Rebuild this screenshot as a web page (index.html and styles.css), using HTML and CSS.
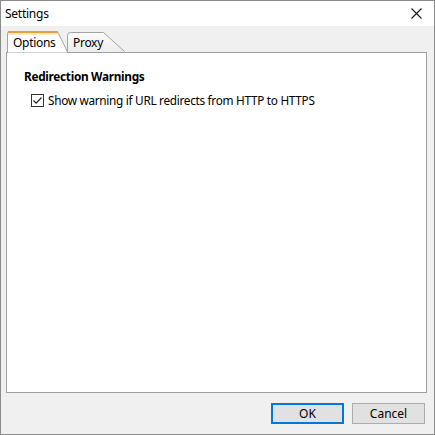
FILE: index.html
```html
<!DOCTYPE html>
<html>
<head>
<meta charset="utf-8">
<link rel="stylesheet" href="styles.css">
</head>
<body>
<div class="window">
  <div class="titlebar">
    <span class="title">Settings</span>
    <svg class="close" width="11" height="11" viewBox="0 0 11 11"><path d="M0.5 0.5L10.5 10.5M10.5 0.5L0.5 10.5" stroke="#1a1a1a" stroke-width="1.1" fill="none"/></svg>
  </div>
  <div class="content">
    <div class="tabs">
      <div class="tab tab-proxy">
        <svg class="tab-shape" width="60" height="20" viewBox="0 0 60 20"><defs><linearGradient id="gp" x1="0" y1="0" x2="0" y2="1"><stop offset="0" stop-color="#fcfcfc"/><stop offset="1" stop-color="#ececec"/></linearGradient></defs><path d="M0.5 20V3.5Q0.5 0.5 3.5 0.5H36.5L57.5 19.5" fill="url(#gp)" stroke="#a3a3a3"/></svg>
        <span class="tab-label">Proxy</span>
      </div>
      <div class="tab tab-options">
        <svg class="tab-shape" width="62" height="22" viewBox="0 0 62 22"><path d="M0.5 22V2.5Q0.5 0.5 2.5 0.5H50.5L61 22Z" fill="#ffffff" stroke="#a3a3a3"/><path d="M1 1.2H50.8" stroke="#e3a437" stroke-width="2"/><path d="M1 3H51.5" stroke="#f3d9a6" stroke-width="1"/></svg>
        <span class="tab-label">Options</span>
      </div>
    </div>
    <div class="panel">
      <div class="group-title">Redirection Warnings</div>
      <label class="check-row">
        <span class="checkbox"><svg width="11" height="11" viewBox="0 0 11 11"><path d="M1.5 5.5L4.2 8.2L9.5 2.5" stroke="#222" stroke-width="1.2" fill="none"/></svg></span>
        <span class="check-text">Show warning if URL redirects from HTTP to HTTPS</span>
      </label>
    </div>
    <div class="footer">
      <button class="btn btn-default">OK</button>
      <button class="btn">Cancel</button>
    </div>
  </div>
</div>
</body>
</html>
```

FILE: styles.css
```css
* { box-sizing: border-box; }
html, body { margin: 0; padding: 0; }
body {
  font-family: "Noto Sans", "Open Sans", sans-serif;
  font-size: 12px;
  color: #000;
  background: #f0f0f0;
}
.window {
  width: 435px;
  height: 435px;
  border: 1px solid #8a8a8a;
  display: flex;
  flex-direction: column;
  background: #f0f0f0;
}
.titlebar {
  height: 25px;
  background: #fff;
  display: flex;
  align-items: center;
  justify-content: space-between;
  padding: 0 12px 0 4px;
}
.title {
  font-size: 12px;
  letter-spacing: -0.25px;
}
.content {
  flex: 1;
  display: flex;
  flex-direction: column;
  padding: 5px 7px 0 5px;
}
.tabs {
  height: 21px;
  display: flex;
  align-items: flex-end;
  position: relative;
  margin-left: 1px;
}
.tab {
  position: relative;
  display: flex;
  align-items: center;
}
.tab-shape {
  position: absolute;
  left: 0;
  bottom: 0;
}
.tab-label {
  position: relative;
  font-size: 12px;
  letter-spacing: -0.3px;
}
.tab-options {
  order: 1;
  width: 60px;
  height: 22px;
  padding-left: 6px;
  margin-bottom: -1px;
  z-index: 2;
}
.tab-proxy {
  order: 2;
  width: 60px;
  height: 20px;
  padding-left: 6px;
  z-index: 1;
}
.panel {
  flex: 1;
  background: #fff;
  border: 1px solid #a0a0a0;
  padding: 14px 0 0 17px;
}
.group-title {
  font-weight: bold;
  font-size: 11.8px;
  letter-spacing: -0.3px;
  height: 18px;
  line-height: 18px;
}
.check-row {
  display: flex;
  align-items: center;
  margin-top: 6px;
  margin-left: 7px;
  height: 18px;
}
.checkbox {
  width: 13px;
  height: 13px;
  border: 1px solid #333;
  background: #fff;
  display: flex;
  align-items: center;
  justify-content: center;
  margin-right: 4px;
  flex-shrink: 0;
}
.check-text {
  font-size: 11.8px;
  letter-spacing: -0.3px;
  white-space: nowrap;
}
.footer {
  height: 41px;
  display: flex;
  justify-content: flex-end;
  align-items: flex-start;
  gap: 8px;
  padding: 10px 2px 0 0;
}
.btn {
  width: 73px;
  height: 21px;
  background: #e1e1e1;
  border: 1px solid #adadad;
  font-family: "Noto Sans", "Open Sans", sans-serif;
  font-size: 12px;
  color: #000;
  padding: 0;
  line-height: 18px;
}
.btn-default {
  border: 2px solid #0078d7;
}
```
